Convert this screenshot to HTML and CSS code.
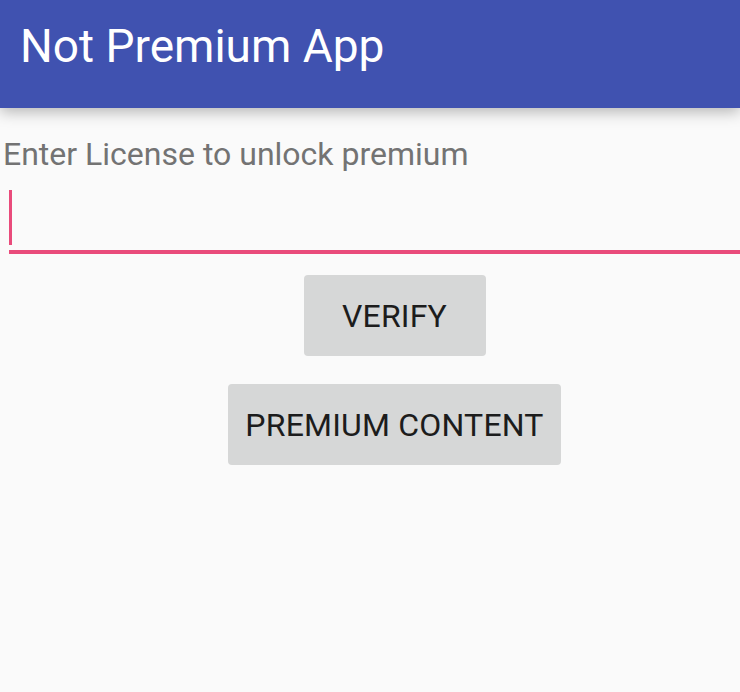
FILE: index.html
```html
<!DOCTYPE html>
<html>
<head>
<meta charset="utf-8">
<link rel="stylesheet" href="styles.css">
</head>
<body>
<div class="screen">
  <header class="appbar"><h1 class="title">Not Premium App</h1></header>
  <main class="content">
    <p class="label">Enter License to unlock premium</p>
    <div class="field"><span class="cursor"></span></div>
    <div class="actions">
      <button class="btn btn-verify">VERIFY</button>
      <button class="btn">PREMIUM CONTENT</button>
    </div>
  </main>
</div>
</body>
</html>
```
FILE: styles.css
```css
html, body {
  margin: 0;
  padding: 0;
  background: #fafafa;
  overflow: hidden;
}
body {
  width: 740px;
  height: 692px;
  font-family: Roboto, "Noto Sans", sans-serif;
}
.screen {
  width: 740px;
  height: 692px;
  background: #fafafa;
  position: relative;
}
.appbar {
  height: 108px;
  background: #4052b0;
  box-shadow: 0 4px 14px rgba(0, 0, 0, 0.28);
  box-sizing: border-box;
  padding: 19px 0 0 20px;
  position: relative;
  z-index: 1;
}
.title {
  margin: 0;
  font-size: 46px;
  line-height: 54px;
  font-weight: 400;
  color: #ffffff;
}
.content {
  padding-top: 27px;
}
.label {
  margin: 0;
  padding-left: 3px;
  font-size: 32px;
  line-height: 38px;
  color: #737373;
}
.field {
  margin: 12px 0 0 9px;
  height: 60px;
  border-bottom: 4px solid #e94b7b;
  display: flex;
  align-items: flex-end;
  padding: 0 0 5px 0;
}
.cursor {
  width: 3px;
  height: 55px;
  background: #e94b7b;
}
.actions {
  width: 740px;
  box-sizing: border-box;
  padding: 21px 0 0 49px;
  display: flex;
  flex-direction: column;
  align-items: center;
  gap: 28px;
}
.btn {
  min-width: 182px;
  height: 81px;
  padding: 0 17px;
  border: none;
  border-radius: 4px;
  background: #d6d7d7;
  color: #1c1c1c;
  font-family: Roboto, "Noto Sans", sans-serif;
  font-size: 32px;
  letter-spacing: 0.2px;
  font-weight: 400;
}
```
